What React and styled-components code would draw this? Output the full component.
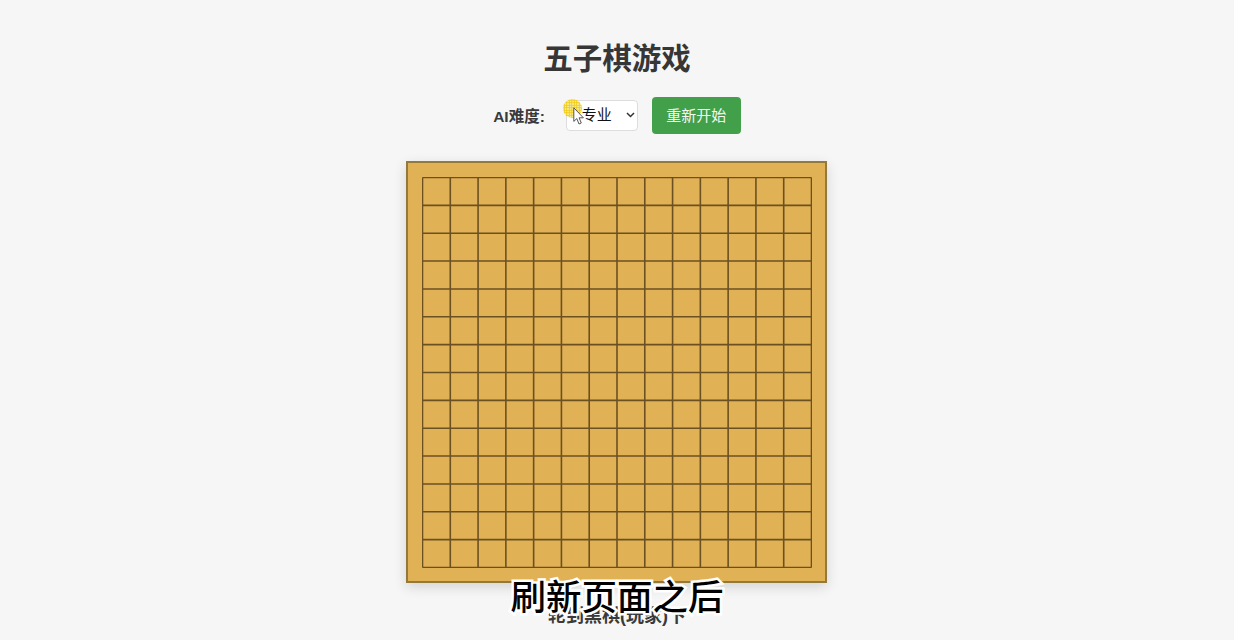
import React from 'react'
import styled, { createGlobalStyle } from 'styled-components'

const GlobalStyle = createGlobalStyle`
  html, body {
    margin: 0;
    height: 100%;
    overflow: hidden;
    background-color: #f6f6f6;
    font-family: "Liberation Sans", "Noto Sans CJK SC", sans-serif;
  }
`

const Page = styled.div`
  align-items: center;
  display: flex;
  flex-direction: column;
  height: 640px;
  overflow: hidden;
  position: relative;
`

const Title = styled.h1`
  color: #363636;
  font-size: 29.5px;
  font-weight: 700;
  line-height: 40px;
  margin: 39px 0 0;
`

const Controls = styled.div`
  align-items: center;
  display: flex;
  height: 37px;
  margin-top: 18px;
`

const Label = styled.label`
  color: #3a3a3a;
  font-size: 15.5px;
  font-weight: 700;
  margin-right: 21px;
  padding-bottom: 2px;
`

const SelectWrap = styled.div`
  margin-right: 14px;
  position: relative;
`

const LevelSelect = styled.select`
  appearance: none;
  background-color: #fff;
  border: 1px solid #ddd;
  border-radius: 4px;
  color: #111;
  display: block;
  font-family: inherit;
  font-size: 15px;
  height: 31px;
  padding: 0 0 2px 15px;
  width: 72px;
`

const Chevron = styled.svg`
  height: 6px;
  pointer-events: none;
  position: absolute;
  right: 3px;
  top: 12px;
  width: 9px;
`

const ClickRing = styled.span`
  background-color: #f8eb9a;
  background-image: radial-gradient(circle, #f0ca12 58%, transparent 66%);
  background-size: 2.5px 2.5px;
  border-radius: 50%;
  height: 19px;
  left: -3px;
  position: absolute;
  top: -1px;
  width: 19px;
`

const Cursor = styled.svg`
  height: 18px;
  left: 7px;
  position: absolute;
  top: 7px;
  width: 11px;
`

const RestartButton = styled.button`
  background-color: #43a04a;
  border: none;
  border-radius: 4px;
  color: #f4f9f3;
  font-family: inherit;
  font-size: 15px;
  height: 37px;
  padding: 0 0 2px;
  width: 89px;
`

const Board = styled.div`
  background-color: #e0b155;
  border: 2px solid #937a3c;
  box-shadow: 0 4px 12px rgba(0, 0, 0, 0.14);
  box-sizing: border-box;
  height: 422px;
  margin: 27px 1px 0 0;
  padding: 13.5px;
  width: 421px;
`

const GridLines = styled.svg`
  display: block;
  height: 391px;
  width: 390px;
`

const Status = styled.div`
  color: #3a3a3a;
  font-size: 18px;
  font-weight: 700;
  line-height: 24px;
  margin-top: 21px;
`

const Subtitle = styled.div`
  color: #000;
  font-size: 35.5px;
  font-weight: 500;
  left: 0;
  line-height: 44px;
  paint-order: stroke fill;
  position: absolute;
  right: 0;
  text-align: center;
  top: 576px;
  -webkit-text-stroke: 5px #fff;
`

const CELLS = 14
const lines = Array.from({ length: CELLS + 1 }, (_, i) => ({
  x: 0.5 + (i * 389) / CELLS,
  y: 0.5 + (i * 390) / CELLS,
}))

function App() {
  return (
    <Page>
      <GlobalStyle />
      <Title>五子棋游戏</Title>
      <Controls>
        <Label>AI难度:</Label>
        <SelectWrap>
          <LevelSelect defaultValue="pro">
            <option value="pro">专业</option>
          </LevelSelect>
          <Chevron viewBox="0 0 9 6">
            <path d="M1 1l3.5 3.5L8 1" fill="none" stroke="#333" strokeWidth="1.5" />
          </Chevron>
          <ClickRing />
          <Cursor viewBox="0 0 11 18">
            <path
              d="M.8.8v13.6l3-2.8 2.2 5.4 2.3-1-2.2-5.2h4.3z"
              fill="#fff"
              stroke="#444"
              strokeWidth="0.9"
              strokeLinejoin="round"
            />
          </Cursor>
        </SelectWrap>
        <RestartButton>重新开始</RestartButton>
      </Controls>
      <Board>
        <GridLines viewBox="0 0 390 391">
          {lines.map(({ x, y }) => (
            <g key={x} stroke="#6b5122" strokeWidth="1.6">
              <line x1={x} y1="0.5" x2={x} y2="390.5" />
              <line x1="0.5" y1={y} x2="389.5" y2={y} />
            </g>
          ))}
        </GridLines>
      </Board>
      <Status>轮到黑棋(玩家)下</Status>
      <Subtitle>刷新页面之后</Subtitle>
    </Page>
  )
}

export default App
